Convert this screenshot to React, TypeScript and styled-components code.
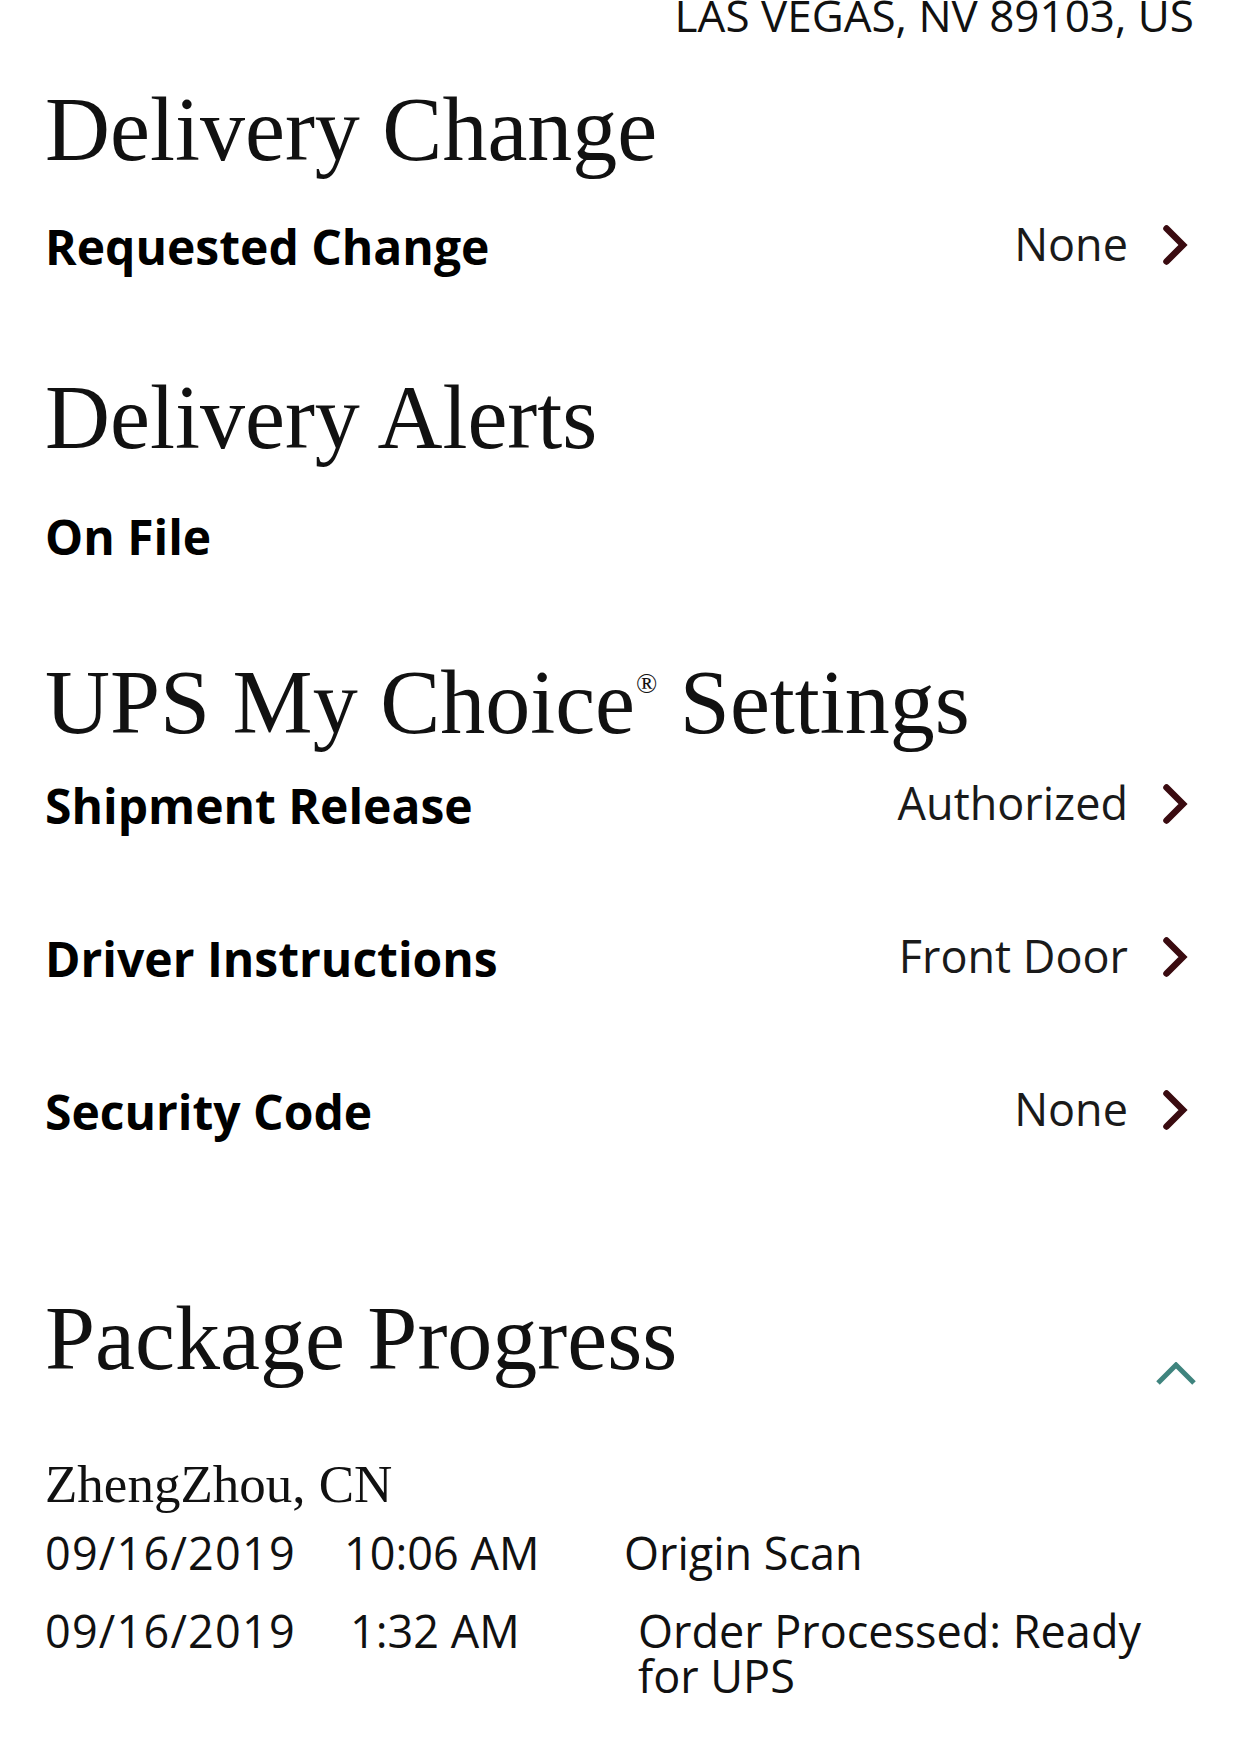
import React from "react";
import styled, { createGlobalStyle } from "styled-components";

const GlobalStyle = createGlobalStyle`
  html, body {
    margin: 0;
    padding: 0;
    background: #ffffff;
  }
  body {
    font-family: "Open Sans", "Noto Sans", sans-serif;
    color: #000;
  }
`;

const Page = styled.main`
  width: 1242px;
  box-sizing: border-box;
  padding: 0 48px 60px 45px;
  display: flex;
  flex-direction: column;
  overflow: hidden;
`;

const Address = styled.div`
  font-family: "Open Sans", "Noto Sans", sans-serif;
  font-size: 44px;
  line-height: 28px;
  height: 28px;
  padding-top: 1px;
  text-align: right;
  color: #111;
  white-space: nowrap;
`;

const Section = styled.section<{ $top: number }>`
  display: flex;
  flex-direction: column;
  margin-top: ${(p) => p.$top}px;
`;

const Heading = styled.h2<{ $gap?: number }>`
  margin: 0 0 ${(p) => p.$gap ?? 0}px 0;
  font-family: "Liberation Serif", "Times New Roman", serif;
  font-weight: 400;
  font-size: 90px;
  line-height: 100px;
  color: #111;
  white-space: nowrap;
`;

const Reg = styled.sup`
  font-size: 28px;
  line-height: 0;
  vertical-align: 40px;
  margin-left: 1px;
`;

const HeadingBar = styled.div`
  display: flex;
  align-items: flex-end;
  justify-content: space-between;
`;

const Rows = styled.div`
  display: flex;
  flex-direction: column;
  gap: 83px;
`;

const Row = styled.div`
  display: flex;
  align-items: center;
  height: 70px;
  padding-right: 6px;
`;

const Label = styled.div`
  flex: 1;
  font-family: "Open Sans", "Noto Sans", sans-serif;
  font-weight: 700;
  font-size: 48px;
  line-height: 70px;
  color: #000;
  white-space: nowrap;
`;

const Value = styled.div`
  font-family: "Open Sans", "Noto Sans", sans-serif;
  font-weight: 400;
  font-size: 45px;
  line-height: 70px;
  color: #1a1a1a;
  white-space: nowrap;
  margin-top: -6px;
`;

const ChevronBox = styled.span`
  display: flex;
  width: 26px;
  height: 42px;
  margin-left: 34px;
  margin-top: -4px;
`;

const ToggleBox = styled.span`
  display: flex;
  width: 42px;
  height: 24px;
  margin-right: -3px;
  margin-bottom: 3px;
`;

const Location = styled.div`
  margin-top: 65px;
  font-family: "Liberation Serif", "Times New Roman", serif;
  font-size: 53px;
  line-height: 60px;
  color: #111;
`;

const Events = styled.div`
  display: flex;
  flex-direction: column;
  gap: 33px;
  margin-top: 16px;
`;

const EventRow = styled.div`
  display: grid;
  grid-template-columns: 299px 280px 1fr;
  font-family: "Open Sans", "Noto Sans", sans-serif;
  font-size: 45px;
  line-height: 45px;
  color: #111;
`;

const DateCell = styled.div`
  white-space: nowrap;
  letter-spacing: 1.2px;
`;

const Cell = styled.div<{ $inset?: number }>`
  padding-left: ${(p) => p.$inset ?? 0}px;
  white-space: nowrap;
`;

const Desc = styled.div<{ $inset?: number }>`
  padding-left: ${(p) => p.$inset ?? 0}px;
  max-width: 520px;
`;

const Chevron = () => (
  <ChevronBox>
    <svg width="26" height="42" viewBox="0 0 26 42" fill="none">
      <polyline
        points="4.5,4.5 21,21 4.5,37.5"
        stroke="#3a0b10"
        strokeWidth="6.5"
        strokeLinecap="round"
        strokeLinejoin="miter"
      />
    </svg>
  </ChevronBox>
);

const CollapseIcon = () => (
  <ToggleBox>
    <svg width="42" height="24" viewBox="0 0 42 24" fill="none">
      <polyline
        points="3,21 21,3 39,21"
        stroke="#3f847e"
        strokeWidth="5"
        strokeLinecap="butt"
      />
    </svg>
  </ToggleBox>
);

type Setting = { label: string; value: string };

const settings: Setting[] = [
  { label: "Shipment Release", value: "Authorized" },
  { label: "Driver Instructions", value: "Front Door" },
  { label: "Security Code", value: "None" },
];

type Scan = { date: string; time: string; desc: string; timeInset: number; descInset: number };

const scans: Scan[] = [
  { date: "09/16/2019", time: "10:06 AM", desc: "Origin Scan", timeInset: 0, descInset: 0 },
  { date: "09/16/2019", time: "1:32 AM", desc: "Order Processed: Ready for UPS", timeInset: 6, descInset: 14 },
];

export default function App() {
  return (
    <>
      <GlobalStyle />
      <Page>
        <Address>LAS VEGAS, NV 89103, US</Address>

        <Section $top={51}>
          <Heading $gap={32}>Delivery Change</Heading>
          <Row>
            <Label>Requested Change</Label>
            <Value>None</Value>
            <Chevron />
          </Row>
        </Section>

        <Section $top={86}>
          <Heading $gap={34}>Delivery Alerts</Heading>
          <Row>
            <Label>On File</Label>
          </Row>
        </Section>

        <Section $top={81}>
          <Heading $gap={18}>
            UPS My Choice<Reg>®</Reg> Settings
          </Heading>
          <Rows>
            {settings.map((s) => (
              <Row key={s.label}>
                <Label>{s.label}</Label>
                <Value>{s.value}</Value>
                <Chevron />
              </Row>
            ))}
          </Rows>
        </Section>

        <Section $top={142}>
          <HeadingBar>
            <Heading>Package Progress</Heading>
            <CollapseIcon />
          </HeadingBar>
          <Location>ZhengZhou, CN</Location>
          <Events>
            {scans.map((e) => (
              <EventRow key={e.time}>
                <DateCell>{e.date}</DateCell>
                <Cell $inset={e.timeInset}>{e.time}</Cell>
                <Desc $inset={e.descInset}>{e.desc}</Desc>
              </EventRow>
            ))}
          </Events>
        </Section>
      </Page>
    </>
  );
}
